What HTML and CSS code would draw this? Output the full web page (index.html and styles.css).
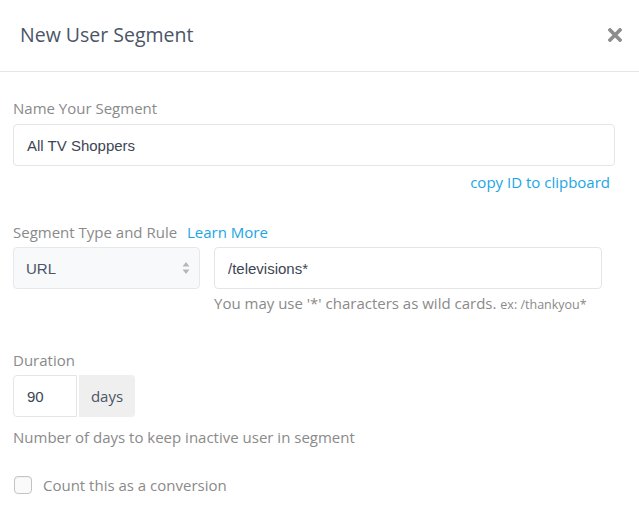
FILE: index.html
```html
<!DOCTYPE html>
<html>
<head>
<meta charset="utf-8">
<link rel="stylesheet" href="styles.css">
</head>
<body>
<div class="modal">
  <div class="modal-header">
    <h1 class="modal-title">New User Segment</h1>
    <span class="close" aria-label="Close">
      <svg width="14" height="14" viewBox="0 0 14 14"><path d="M2 2 L12 12 M12 2 L2 12" stroke="#8c8c8c" stroke-width="3.6" stroke-linecap="square"/></svg>
    </span>
  </div>
  <div class="modal-body">
    <div class="group g-name">
      <label class="label">Name Your Segment</label>
      <div class="input input-full">All TV Shoppers</div>
      <div class="copy-row"><a class="link">copy ID to clipboard</a></div>
    </div>
    <div class="group g-rule">
      <label class="label">Segment Type and Rule <a class="link learn">Learn More</a></label>
      <div class="rule-row">
        <div class="select">
          <span>URL</span>
          <svg class="arrows" width="8" height="14" viewBox="0 0 8 14"><path d="M4 1 L7.5 5.5 L0.5 5.5 Z M4 13 L7.5 8.5 L0.5 8.5 Z" fill="#b3b8bd"/></svg>
        </div>
        <div class="rule-col">
          <div class="input input-rule">/televisions*</div>
          <div class="help">You may use '*' characters as wild cards. <small>ex: /thankyou*</small></div>
        </div>
      </div>
    </div>
    <div class="group g-duration">
      <label class="label">Duration</label>
      <div class="input-group">
        <div class="input input-days">90</div>
        <div class="addon">days</div>
      </div>
      <div class="help help-days">Number of days to keep inactive user in segment</div>
    </div>
    <div class="check-row">
      <span class="checkbox"></span>
      <span class="check-label">Count this as a conversion</span>
    </div>
  </div>
</div>
</body>
</html>
```
FILE: styles.css
```css
* { box-sizing: border-box; }
html, body { margin: 0; padding: 0; background: #fff; }
body { font-family: "Open Sans", "Liberation Sans", sans-serif; width: 639px; height: 520px; overflow: hidden; }

.modal-header {
  height: 72px;
  border-bottom: 1px solid #e6e6e6;
  display: flex;
  align-items: center;
  justify-content: space-between;
  padding: 0 17px 0 20px;
}
.modal-title {
  margin: 0;
  font-size: 19.5px;
  font-weight: 400;
  color: #4b5567;
  line-height: 24px;
  padding-bottom: 2px;
}
.close { display: flex; width: 14px; height: 14px; margin-bottom: 1px; }

.modal-body { padding: 26px 24px 0 13px; }

.label {
  display: block;
  font-size: 15px;
  line-height: 20px;
  color: #8a8a8a;
}
.link { color: #1aa6e6; text-decoration: none; }
.learn { margin-left: 6px; font-size: 15px; }

.input {
  height: 42px;
  border: 1px solid #e5e5e5;
  border-radius: 4px;
  background: #fff;
  font-family: "Liberation Sans", Arial, sans-serif;
  font-size: 15px;
  color: #3c4555;
  display: flex;
  align-items: center;
  padding-left: 13px;
}
.g-name .input-full { margin-top: 6px; width: 602px; }
.copy-row { text-align: right; padding-right: 5px; margin-top: 6px; font-size: 15px; line-height: 20px; }

.g-rule { margin-top: 30px; }
.rule-row { display: flex; gap: 14px; margin-top: 5px; align-items: flex-start; }
.select {
  width: 187px;
  height: 42px;
  border: 1px solid #e6e9ec;
  border-radius: 4px;
  background: #f7f9fa;
  display: flex;
  align-items: center;
  justify-content: space-between;
  padding: 0 9px 0 12px;
  font-family: "Liberation Sans", Arial, sans-serif;
  font-size: 15px;
  color: #4b5567;
}
.arrows { display: block; }
.rule-col { display: flex; flex-direction: column; }
.input-rule { width: 388px; }
.help {
  font-size: 15px;
  line-height: 20px;
  color: #8a8a8a;
  margin-top: 4px;
}
.help small { font-size: 12.5px; }

.g-duration { margin-top: 35px; }
.input-group { display: flex; margin-top: 5px; gap: 2px; }
.input-days { width: 64px; padding-left: 13px; border-radius: 4px 0 0 4px; }
.addon {
  width: 56px;
  height: 42px;
  background: #efefef;
  border-radius: 0 4px 4px 0;
  display: flex;
  align-items: center;
  justify-content: center;
  font-size: 15px;
  color: #4b5567;
}
.help-days { margin-top: 10px; }

.check-row { display: flex; align-items: center; margin-top: 28px; margin-left: 1px; }
.checkbox {
  width: 18px;
  height: 18px;
  border: 1px solid #c4c4c4;
  border-radius: 4px;
  background: #fafafa;
  box-shadow: inset 0 1px 1px rgba(0,0,0,0.04);
}
.check-label { margin-left: 11px; font-size: 15px; color: #8a8a8a; line-height: 20px; }
```
